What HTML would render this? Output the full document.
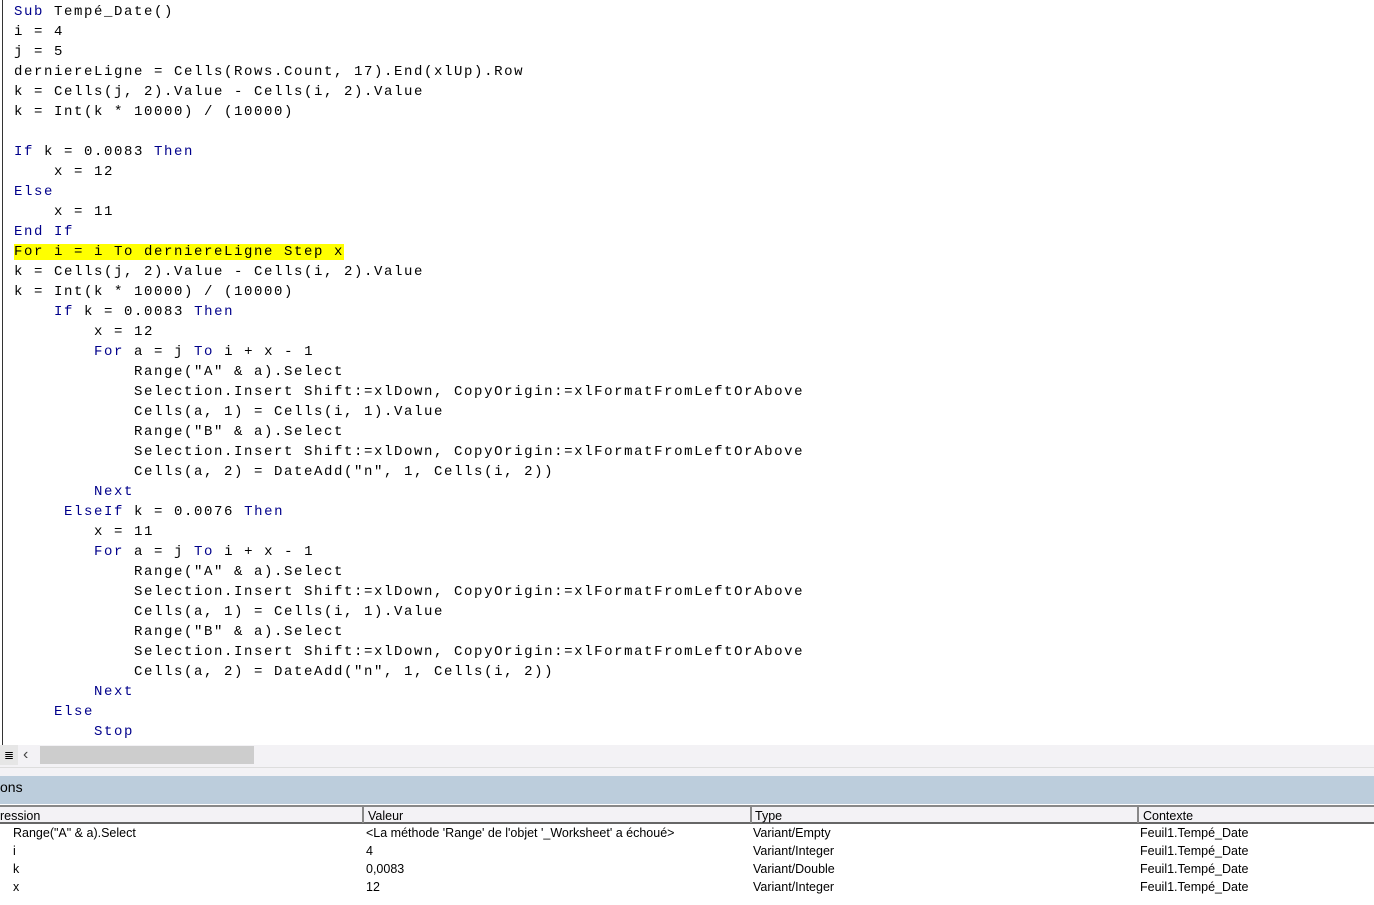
<!DOCTYPE html>
<html><head><meta charset="utf-8"><style>
body{margin:0;width:1374px;height:905px;background:#fff;position:relative;overflow:hidden;font-family:"Liberation Sans",sans-serif}
#code{position:absolute;left:2px;top:0;width:1372px;height:745px;background:#fff;border-left:1px solid #333;box-sizing:border-box}
.l{position:absolute;left:11px;height:20px;line-height:20px;font-family:"Liberation Mono",monospace;font-size:14px;letter-spacing:1.6px;white-space:pre;color:#000}
.k{color:#00008b}
.hl{background:#ffff00}
#sb{position:absolute;left:0;top:745px;width:1374px;height:22px;background:#f3f2f5}
#sb2{position:absolute;left:0;top:767px;width:1374px;height:9px;background:#f3f2f5;border-top:1px solid #ddd}
#title{position:absolute;left:0;top:776px;width:1374px;height:28px;background:#bccddc;font-size:14px;line-height:23px}
#hdr{position:absolute;left:0;top:805px;width:1374px;height:19px;background:#f3f2f5;border-top:2px solid #888;border-bottom:2px solid #666;box-sizing:border-box}
.c{position:absolute;font-size:12.5px;line-height:17px;white-space:pre}
.v{position:absolute;top:807px;height:16px;border-left:2px solid #888}
</style></head><body>
<div id="code">
<div class="l" style="top:2px"><span class="k">Sub</span> Tempé_Date()</div>
<div class="l" style="top:22px">i = 4</div>
<div class="l" style="top:42px">j = 5</div>
<div class="l" style="top:62px">derniereLigne = Cells(Rows.Count, 17).End(xlUp).Row</div>
<div class="l" style="top:82px">k = Cells(j, 2).Value - Cells(i, 2).Value</div>
<div class="l" style="top:102px">k = Int(k * 10000) / (10000)</div>
<div class="l" style="top:142px"><span class="k">If</span> k = 0.0083 <span class="k">Then</span></div>
<div class="l" style="top:162px">    x = 12</div>
<div class="l" style="top:182px"><span class="k">Else</span></div>
<div class="l" style="top:202px">    x = 11</div>
<div class="l" style="top:222px"><span class="k">End If</span></div>
<div class="l" style="top:242px"><span class="hl">For i = i To derniereLigne Step x</span></div>
<div class="l" style="top:262px">k = Cells(j, 2).Value - Cells(i, 2).Value</div>
<div class="l" style="top:282px">k = Int(k * 10000) / (10000)</div>
<div class="l" style="top:302px">    <span class="k">If</span> k = 0.0083 <span class="k">Then</span></div>
<div class="l" style="top:322px">        x = 12</div>
<div class="l" style="top:342px">        <span class="k">For</span> a = j <span class="k">To</span> i + x - 1</div>
<div class="l" style="top:362px">            Range("A" &amp; a).Select</div>
<div class="l" style="top:382px">            Selection.Insert Shift:=xlDown, CopyOrigin:=xlFormatFromLeftOrAbove</div>
<div class="l" style="top:402px">            Cells(a, 1) = Cells(i, 1).Value</div>
<div class="l" style="top:422px">            Range("B" &amp; a).Select</div>
<div class="l" style="top:442px">            Selection.Insert Shift:=xlDown, CopyOrigin:=xlFormatFromLeftOrAbove</div>
<div class="l" style="top:462px">            Cells(a, 2) = DateAdd("n", 1, Cells(i, 2))</div>
<div class="l" style="top:482px">        <span class="k">Next</span></div>
<div class="l" style="top:502px">     <span class="k">ElseIf</span> k = 0.0076 <span class="k">Then</span></div>
<div class="l" style="top:522px">        x = 11</div>
<div class="l" style="top:542px">        <span class="k">For</span> a = j <span class="k">To</span> i + x - 1</div>
<div class="l" style="top:562px">            Range("A" &amp; a).Select</div>
<div class="l" style="top:582px">            Selection.Insert Shift:=xlDown, CopyOrigin:=xlFormatFromLeftOrAbove</div>
<div class="l" style="top:602px">            Cells(a, 1) = Cells(i, 1).Value</div>
<div class="l" style="top:622px">            Range("B" &amp; a).Select</div>
<div class="l" style="top:642px">            Selection.Insert Shift:=xlDown, CopyOrigin:=xlFormatFromLeftOrAbove</div>
<div class="l" style="top:662px">            Cells(a, 2) = DateAdd("n", 1, Cells(i, 2))</div>
<div class="l" style="top:682px">        <span class="k">Next</span></div>
<div class="l" style="top:702px">    <span class="k">Else</span></div>
<div class="l" style="top:722px">        <span class="k">Stop</span></div>
</div>
<div id="sb">
 <div style="position:absolute;left:0;top:0;width:18px;height:20px;background:#e6e6e6;font-size:12px;line-height:20px;text-align:center">≣</div>
 <div style="position:absolute;left:23px;top:0;width:14px;height:20px;font-size:16px;line-height:20px;color:#444">‹</div>
 <div style="position:absolute;left:40px;top:1px;width:214px;height:18px;background:#cdcdcd"></div>
</div>
<div id="sb2"></div>
<div id="title">ons</div>
<div id="hdr"></div>
<div class="v" style="left:362px"></div><div class="v" style="left:750px"></div><div class="v" style="left:1137px"></div>
<div class="c" style="left:0;top:808px">ression</div>
<div class="c" style="left:368px;top:808px">Valeur</div>
<div class="c" style="left:755px;top:808px">Type</div>
<div class="c" style="left:1143px;top:808px">Contexte</div>
<div class="c" style="left:13px;top:825px">Range("A" &amp; a).Select</div>
<div class="c" style="left:366px;top:825px">&lt;La méthode 'Range' de l'objet '_Worksheet' a échoué&gt;</div>
<div class="c" style="left:753px;top:825px">Variant/Empty</div>
<div class="c" style="left:1140px;top:825px">Feuil1.Tempé_Date</div>
<div class="c" style="left:13px;top:843px">i</div>
<div class="c" style="left:366px;top:843px">4</div>
<div class="c" style="left:753px;top:843px">Variant/Integer</div>
<div class="c" style="left:1140px;top:843px">Feuil1.Tempé_Date</div>
<div class="c" style="left:13px;top:861px">k</div>
<div class="c" style="left:366px;top:861px">0,0083</div>
<div class="c" style="left:753px;top:861px">Variant/Double</div>
<div class="c" style="left:1140px;top:861px">Feuil1.Tempé_Date</div>
<div class="c" style="left:13px;top:879px">x</div>
<div class="c" style="left:366px;top:879px">12</div>
<div class="c" style="left:753px;top:879px">Variant/Integer</div>
<div class="c" style="left:1140px;top:879px">Feuil1.Tempé_Date</div>
</body></html>
